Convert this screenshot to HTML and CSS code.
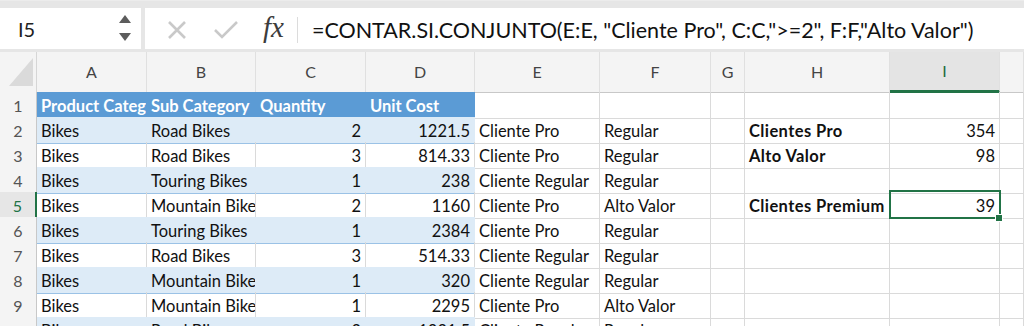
FILE: index.html
```html
<!DOCTYPE html>
<html lang="es">
<head>
    <meta charset="UTF-8">
    <title>CONTAR.SI.CONJUNTO</title>
    <link rel="stylesheet" href="styles.css">
</head>
<body>

    <div class="toolbar">
        <div class="name-box">
            <span class="cell-ref">I5</span>
            <svg class="spin" width="14" height="30" viewBox="0 0 14 30">
                <polygon points="7,1 13,9 1,9" fill="#5c5c5c"/>
                <polygon points="1,19 13,19 7,27" fill="#5c5c5c"/>
            </svg>
        </div>
        <div class="formula-bar">
            <svg class="fbtn cancel" width="20" height="20" viewBox="0 0 20 20">
                <path d="M2 2 L18 18 M18 2 L2 18" stroke="#c9c9c9" stroke-width="2.6" fill="none"/>
            </svg>
            <svg class="fbtn enter" width="26" height="20" viewBox="0 0 26 20">
                <path d="M2 10 L9 17 L24 2" stroke="#c9c9c9" stroke-width="2.6" fill="none"/>
            </svg>
            <span class="fx">fx</span>
            <span class="divider"></span>
            <span class="formula">=CONTAR.SI.CONJUNTO(E:E, "Cliente Pro", C:C,"&gt;=2", F:F,"Alto Valor")</span>
        </div>
    </div>

    <div class="sheet">
        <!-- column headers -->
        <div class="row head-row">
            <div class="corner">
                <svg width="24" height="28" viewBox="0 0 24 28"><polygon points="24,0 24,28 0,28" fill="#dadada"/></svg>
            </div>
            <div class="hd">A</div>
            <div class="hd">B</div>
            <div class="hd">C</div>
            <div class="hd">D</div>
            <div class="hd">E</div>
            <div class="hd">F</div>
            <div class="hd">G</div>
            <div class="hd">H</div>
            <div class="hd hd-sel">I</div>
            <div class="hd"></div>
        </div>

        <div class="row">
            <div class="rh">1</div>
            <div class="c th">Product Category</div>
            <div class="c th">Sub Category</div>
            <div class="c th">Quantity</div>
            <div class="c th th-pad">Unit Cost</div>
            <div class="c"></div><div class="c"></div><div class="c"></div><div class="c"></div><div class="c"></div><div class="c"></div>
        </div>

        <div class="row">
            <div class="rh">2</div>
            <div class="c band">Bikes</div>
            <div class="c band">Road Bikes</div>
            <div class="c band num">2</div>
            <div class="c band num">1221.5</div>
            <div class="c">Cliente Pro</div>
            <div class="c">Regular</div>
            <div class="c"></div>
            <div class="c b">Clientes Pro</div>
            <div class="c num">354</div>
            <div class="c"></div>
        </div>

        <div class="row">
            <div class="rh">3</div>
            <div class="c plain">Bikes</div>
            <div class="c plain">Road Bikes</div>
            <div class="c plain num">3</div>
            <div class="c plain num">814.33</div>
            <div class="c">Cliente Pro</div>
            <div class="c">Regular</div>
            <div class="c"></div>
            <div class="c b">Alto Valor</div>
            <div class="c num">98</div>
            <div class="c"></div>
        </div>

        <div class="row">
            <div class="rh">4</div>
            <div class="c band">Bikes</div>
            <div class="c band">Touring Bikes</div>
            <div class="c band num">1</div>
            <div class="c band num">238</div>
            <div class="c">Cliente Regular</div>
            <div class="c">Regular</div>
            <div class="c"></div><div class="c"></div><div class="c"></div><div class="c"></div>
        </div>

        <div class="row">
            <div class="rh rh-sel">5</div>
            <div class="c plain">Bikes</div>
            <div class="c plain">Mountain Bikes</div>
            <div class="c plain num">2</div>
            <div class="c plain num">1160</div>
            <div class="c">Cliente Pro</div>
            <div class="c">Alto Valor</div>
            <div class="c"></div>
            <div class="c b">Clientes Premium</div>
            <div class="c num active">39<span class="handle"></span></div>
            <div class="c"></div>
        </div>

        <div class="row">
            <div class="rh">6</div>
            <div class="c band">Bikes</div>
            <div class="c band">Touring Bikes</div>
            <div class="c band num">1</div>
            <div class="c band num">2384</div>
            <div class="c">Cliente Pro</div>
            <div class="c">Regular</div>
            <div class="c"></div><div class="c"></div><div class="c"></div><div class="c"></div>
        </div>

        <div class="row">
            <div class="rh">7</div>
            <div class="c plain">Bikes</div>
            <div class="c plain">Road Bikes</div>
            <div class="c plain num">3</div>
            <div class="c plain num">514.33</div>
            <div class="c">Cliente Regular</div>
            <div class="c">Regular</div>
            <div class="c"></div><div class="c"></div><div class="c"></div><div class="c"></div>
        </div>

        <div class="row">
            <div class="rh">8</div>
            <div class="c band">Bikes</div>
            <div class="c band">Mountain Bikes</div>
            <div class="c band num">1</div>
            <div class="c band num">320</div>
            <div class="c">Cliente Regular</div>
            <div class="c">Regular</div>
            <div class="c"></div><div class="c"></div><div class="c"></div><div class="c"></div>
        </div>

        <div class="row">
            <div class="rh">9</div>
            <div class="c plain">Bikes</div>
            <div class="c plain">Mountain Bikes</div>
            <div class="c plain num">1</div>
            <div class="c plain num">2295</div>
            <div class="c">Cliente Pro</div>
            <div class="c">Alto Valor</div>
            <div class="c"></div><div class="c"></div><div class="c"></div><div class="c"></div>
        </div>

        <div class="row">
            <div class="rh">10</div>
            <div class="c band">Bikes</div>
            <div class="c band">Road Bikes</div>
            <div class="c band num">2</div>
            <div class="c band num">1221.5</div>
            <div class="c">Cliente Regular</div>
            <div class="c">Regular</div>
            <div class="c"></div><div class="c"></div><div class="c"></div><div class="c"></div>
        </div>
    </div>

</body>
</html>
```

FILE: styles.css
```css
/* Spreadsheet window: formula bar + grid */

* {
    box-sizing: border-box;
}

body {
    margin: 0;
    padding: 0;
    width: 1024px;
    height: 326px;
    overflow: hidden;
    background-color: #ffffff;
    font-family: 'Lato', 'Open Sans', sans-serif;
    color: #111111;
}

/* Toolbar with name box and formula bar */
.toolbar {
    display: flex;
    gap: 4px;
    height: 52px;
    padding: 7px 0 3px 0;
    background-color: #e6e6e6;
    border-top: 1px solid #ececec;
}

.name-box {
    width: 141px;
    flex-shrink: 0;
    background-color: #ffffff;
    display: flex;
    align-items: center;
    justify-content: space-between;
    padding: 1px 9px 0 18px;
}

.cell-ref {
    font-size: 20px;
    color: #222222;
}

.formula-bar {
    flex-grow: 1;
    background-color: #ffffff;
    display: flex;
    align-items: center;
    padding-left: 22px;
    padding-top: 2px;
}

.fbtn {
    flex-shrink: 0;
}

.cancel {
    margin-right: 26px;
}

.enter {
    margin-right: 24px;
}

.fx {
    font-family: 'Liberation Serif', serif;
    font-style: italic;
    font-size: 29px;
    color: #3c3c3c;
    margin-top: -5px;
}

.divider {
    width: 1px;
    height: 26px;
    background-color: #dcdcdc;
    margin: 0 14px 0 13px;
}

.formula {
    font-size: 21.5px;
    color: #111111;
    white-space: nowrap;
}

/* Grid */
.row {
    display: grid;
    grid-template-columns: 37px 110px 109px 110px 109px 125px 111px 34px 145px 110px 24px;
    height: 25px;
}

.head-row {
    height: 40px;
    background-color: #f4f4f4;
}

.corner {
    border-right: 1px solid #d6d6d6;
    border-bottom: 1px solid #c8c8c8;
    display: flex;
    align-items: flex-end;
    justify-content: flex-end;
    padding: 0 3px 6px 0;
}

.hd {
    border-right: 1px solid #e0e0e0;
    border-bottom: 1px solid #c8c8c8;
    text-align: center;
    font-size: 16px;
    line-height: 40px;
    color: #444444;
}

.hd-sel {
    background-color: #e4e4e4;
    border-bottom: 3px solid #217346;
    line-height: 38px;
    color: #1e6b3f;
}

.rh {
    background-color: #f4f4f4;
    border-right: 1px solid #c8c8c8;
    border-bottom: 1px solid #e0e0e0;
    text-align: center;
    font-size: 16px;
    line-height: 24px;
    padding-top: 2px;
    color: #555555;
}

.rh-sel {
    background-color: #e6e6e6;
    border-right: 2px solid #217346;
    color: #217346;
}

.c {
    border-right: 1px solid #dadada;
    border-bottom: 1px solid #dadada;
    font-size: 16.5px;
    line-height: 24px;
    padding: 2px 4px 0 4px;
    white-space: nowrap;
    overflow: hidden;
    text-overflow: clip;
}

.num {
    text-align: right;
}

.b {
    font-weight: bold;
    letter-spacing: 0.4px;
}

/* Table styling (A1:D10) */
.th {
    background-color: #5b9bd5;
    border-right-color: #5b9bd5;
    border-bottom-color: #9bc2e6;
    color: #ffffff;
    font-weight: bold;
}

.band {
    background-color: #ddebf7;
    border-right-color: #ddebf7;
    border-bottom-color: #9bc2e6;
}

.plain {
    border-bottom-color: #9bc2e6;
}

/* Active cell */
.active {
    position: relative;
    overflow: visible;
}

.active::before {
    content: "";
    position: absolute;
    top: -2px;
    left: -1px;
    right: -2px;
    bottom: -1px;
    border: 2px solid #217346;
}

.handle {
    position: absolute;
    right: -4px;
    bottom: -4px;
    width: 8px;
    height: 8px;
    background-color: #217346;
    border: 1px solid #ffffff;
}
```
